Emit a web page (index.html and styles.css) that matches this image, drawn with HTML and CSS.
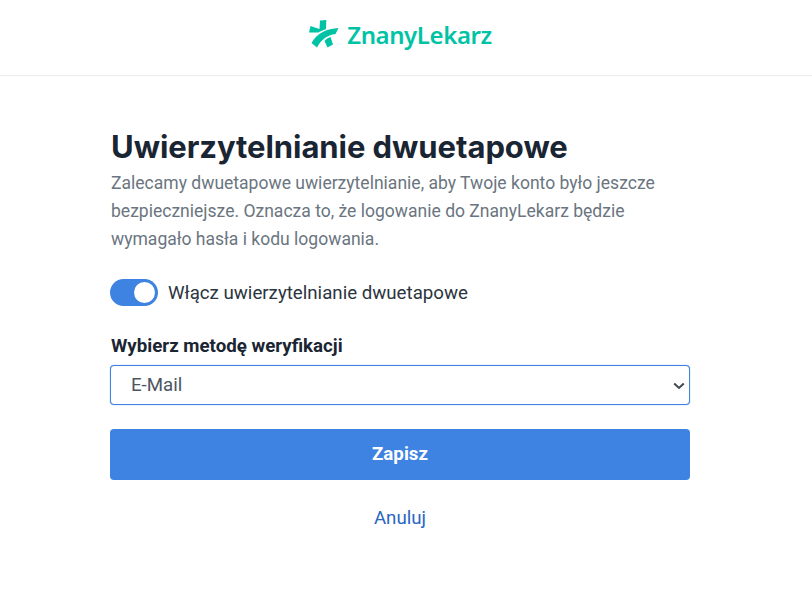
FILE: index.html
```html
<!DOCTYPE html>
<html lang="en">
<head>
    <meta charset="UTF-8">
    <meta name="viewport" content="width=device-width, initial-scale=1.0">
    <title>Uwierzytelnianie dwuetapowe</title>
    <link rel="stylesheet" href="styles.css">
</head>
<body>
    <header class="topbar">
        <a class="logo" href="#">
            <svg class="logo-icon" viewBox="0 0 30 28" width="30" height="28">
                <path d="M11 .5 L17.3 0 L17 9 L9 12.5 L0 12.5 L1.5 6 L10.5 9 Z" fill="#00c3a5"/>
                <path d="M29.5 8 L26.5 14 C18 15 12 20 8 27.5 L2.5 23 C8 13 18 8.5 29.5 8 Z" fill="#00c3a5"/>
                <path d="M21.5 17 L24 24.5 L18.5 27.5 L15.5 21 C17 19.2 19 17.8 21.5 17 Z" fill="#00c3a5"/>
            </svg>
            <span class="logo-text">ZnanyLekarz</span>
        </a>
    </header>

    <main class="container">
        <h1>Uwierzytelnianie dwuetapowe</h1>
        <p class="lead">Zalecamy dwuetapowe uwierzytelnianie, aby Twoje konto było jeszcze bezpieczniejsze. Oznacza to, że logowanie do ZnanyLekarz będzie wymagało hasła i kodu logowania.</p>

        <label class="toggle-row">
            <input type="checkbox" checked>
            <span class="toggle"></span>
            <span class="toggle-label">Włącz uwierzytelnianie dwuetapowe</span>
        </label>

        <label class="field-label" for="method">Wybierz metodę weryfikacji</label>
        <div class="select-wrapper">
            <select id="method">
                <option>E-Mail</option>
                <option>SMS</option>
            </select>
            <svg class="chevron" viewBox="0 0 12 8" width="12" height="8">
                <path d="M1.2 1.5 L6 6 L10.8 1.5" fill="none" stroke="#3f4750" stroke-width="2"/>
            </svg>
        </div>

        <button type="button">Zapisz</button>
        <a class="cancel" href="#">Anuluj</a>
    </main>
</body>
</html>
```

FILE: styles.css
```css
:root {
    --text-color: #1a2533;
    --text-secondary: #6a7580;
    --accent-color: #3e82e2;
    --link-color: #2a66c4;
    --logo-color: #00c3a5;
}

* {
    margin: 0;
    padding: 0;
    box-sizing: border-box;
}

body {
    font-family: Roboto, sans-serif;
    background: #fff;
    color: var(--text-color);
}

.topbar {
    height: 76px;
    display: flex;
    align-items: center;
    justify-content: center;
    border-bottom: 1px solid #ececec;
    padding-bottom: 7px;
    padding-right: 11px;
}

.logo {
    display: flex;
    align-items: center;
    gap: 8px;
    text-decoration: none;
    color: var(--logo-color);
}

.logo-text {
    font-family: 'Noto Sans', sans-serif;
    font-size: 24px;
    font-weight: 600;
    letter-spacing: -0.4px;
}

.container {
    width: 580px;
    margin-left: 110px;
    padding-top: 53px;
}

h1 {
    font-family: Inter, sans-serif;
    font-size: 31px;
    font-weight: 700;
    line-height: 36px;
    letter-spacing: -0.06px;
    padding-left: 1px;
    margin-bottom: 4px;
}

.lead {
    font-size: 17.55px;
    line-height: 28px;
    color: var(--text-secondary);
    padding-left: 1px;
    margin-bottom: 26px;
}

.toggle-row {
    display: flex;
    align-items: center;
    gap: 10px;
    margin-bottom: 29px;
}

.toggle-row input {
    display: none;
}

.toggle {
    width: 48px;
    height: 27px;
    border-radius: 14px;
    background: var(--accent-color);
    display: flex;
    justify-content: flex-end;
    align-items: center;
    padding-right: 3px;
}

.toggle::after {
    content: '';
    width: 21px;
    height: 21px;
    border-radius: 50%;
    background: #fff;
}

.toggle-label {
    font-size: 18.7px;
    color: #2b3540;
}

.field-label {
    display: block;
    font-size: 18.7px;
    font-weight: 700;
    line-height: 22px;
    padding-left: 1px;
    margin-bottom: 8px;
}

.select-wrapper {
    position: relative;
    margin-bottom: 24px;
}

select {
    display: block;
    width: 100%;
    height: 40px;
    padding: 0 20px;
    border: 1px solid var(--accent-color);
    border-radius: 4px;
    background: #fff;
    box-shadow: 0 0 1px var(--accent-color);
    appearance: none;
    font-family: Roboto, sans-serif;
    font-size: 18.7px;
    color: #4d5660;
}

.chevron {
    position: absolute;
    right: 5px;
    top: 17px;
}

button {
    display: block;
    width: 100%;
    height: 51px;
    padding-bottom: 2px;
    border: none;
    border-radius: 4px;
    background: var(--accent-color);
    color: #fff;
    font-family: Roboto, sans-serif;
    font-size: 18.7px;
    font-weight: 700;
    cursor: pointer;
}

.cancel {
    display: block;
    margin-top: 27px;
    text-align: center;
    font-size: 18.7px;
    line-height: 22px;
    color: var(--link-color);
    text-decoration: none;
}
```
